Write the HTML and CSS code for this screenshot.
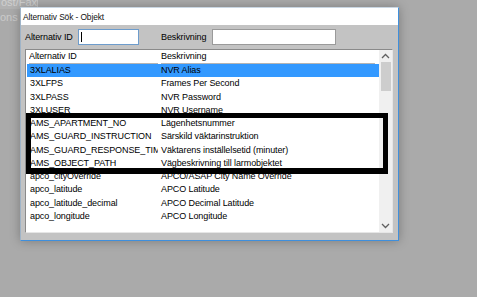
FILE: index.html
```html
<!doctype html>
<html lang="sv">
<head>
    <meta charset="utf-8">
    <title>Alternativ Sök - Objekt</title>
    <link rel="stylesheet" href="styles.css">
</head>
<body>
    <div class="desk">
        <div class="desk-tab">ost/Fax</div>
        <div class="desk-menu">ons</div>
    </div>

    <div class="dialog">
        <div class="titlebar">Alternativ Sök - Objekt</div>
        <div class="content">
            <div class="filter">
                <label class="id-label">Alternativ ID</label>
                <span class="input id-input"><span class="caret"></span></span>
                <label class="desc-label">Beskrivning</label>
                <span class="input desc-input"></span>
            </div>

            <div class="list">
                <div class="rows">
                    <div class="row header"><span class="c1">Alternativ ID</span><span class="c2">Beskrivning</span></div>
                    <div class="row selected"><span class="c1">3XLALIAS</span><span class="c2">NVR Alias</span></div>
                    <div class="row"><span class="c1">3XLFPS</span><span class="c2">Frames Per Second</span></div>
                    <div class="row"><span class="c1">3XLPASS</span><span class="c2">NVR Password</span></div>
                    <div class="row"><span class="c1">3XLUSER</span><span class="c2">NVR Username</span></div>
                    <div class="row"><span class="c1">AMS_APARTMENT_NO</span><span class="c2">Lägenhetsnummer</span></div>
                    <div class="row"><span class="c1">AMS_GUARD_INSTRUCTION</span><span class="c2">Särskild väktarinstruktion</span></div>
                    <div class="row"><span class="c1">AMS_GUARD_RESPONSE_TIME</span><span class="c2">Väktarens inställelsetid (minuter)</span></div>
                    <div class="row"><span class="c1">AMS_OBJECT_PATH</span><span class="c2">Vägbeskrivning till larmobjektet</span></div>
                    <div class="row"><span class="c1">apco_cityOverride</span><span class="c2">APCO/ASAP City Name Override</span></div>
                    <div class="row"><span class="c1">apco_latitude</span><span class="c2">APCO Latitude</span></div>
                    <div class="row"><span class="c1">apco_latitude_decimal</span><span class="c2">APCO Decimal Latitude</span></div>
                    <div class="row"><span class="c1">apco_longitude</span><span class="c2">APCO Longitude</span></div>
                </div>
                <div class="scrollbar">
                    <div class="arrow">
                        <svg width="9" height="6" viewBox="0 0 9 6"><polyline points="1,5 4.5,1.5 8,5" fill="none" stroke="#606060" stroke-width="1.3"/></svg>
                    </div>
                    <div class="thumb"></div>
                    <div class="track"></div>
                    <div class="arrow">
                        <svg width="9" height="6" viewBox="0 0 9 6"><polyline points="1,1 4.5,4.5 8,1" fill="none" stroke="#606060" stroke-width="1.3"/></svg>
                    </div>
                </div>
            </div>
        </div>
    </div>

    <!-- annotation drawn over the list -->
    <div class="mark"></div>
</body>
</html>
```

FILE: styles.css
```css
* {
    box-sizing: border-box;
}
body {
    margin: 0;
    width: 477px;
    height: 297px;
    overflow: hidden;
    background-color: #aaaaaa;
    font-family: "Liberation Sans", Arial, sans-serif;
    font-size: 9px;
    letter-spacing: -0.1px;
    color: #000;
}
.desk {
    width: 40px;
}
.desk-tab {
    width: 38px;
    height: 9px;
    line-height: 5px;
    padding-left: 1px;
    background-color: #b2b2b2;
    border-right: 1px solid #c4c4c4;
    color: #d0d0d0;
    font-size: 11px;
    letter-spacing: 0;
    overflow: hidden;
}
.desk-menu {
    width: 20px;
    height: 16px;
    line-height: 17px;
    color: #cbcbcb;
    font-size: 11px;
    letter-spacing: 0;
}
.dialog {
    position: absolute;
    left: 20px;
    top: 7px;
    width: 379px;
    height: 234px;
    border: 1px solid #3f8fdc;
    border-left-color: #9fb4c8;
    border-top-color: #c9d6e2;
    box-shadow: 0 0 10px rgba(0, 0, 0, 0.28);
    display: flex;
    flex-direction: column;
}
.titlebar {
    height: 17px;
    line-height: 18px;
    padding-left: 2px;
    background-color: #fff;
    font-size: 8.4px;
    color: #111;
}
.content {
    flex: 1;
    background-color: #c3c3c3;
    padding: 4px 5px 7px 4px;
    display: flex;
    flex-direction: column;
    gap: 4px;
}
.filter {
    display: flex;
    align-items: center;
    height: 16px;
}
.id-label {
    width: 53px;
}
.desc-label {
    width: 51px;
    margin-left: 22px;
}
.input {
    display: block;
    height: 16px;
    background-color: #fff;
    border: 1px solid #9a9a9a;
}
.id-input {
    width: 61px;
    border-color: #6d9ccc;
    padding: 2px 0 0 2px;
}
.caret {
    display: block;
    width: 1px;
    height: 10px;
    background-color: #000;
}
.desc-input {
    width: 124px;
}
.list {
    flex: 1;
    display: flex;
    background-color: #fff;
    border: 1px solid;
    border-color: #8a8a8a #e6e6e6 #e6e6e6 #8a8a8a;
}
.rows {
    flex: 1;
    padding-left: 1px;
    overflow: hidden;
}
.row {
    display: flex;
    height: 13.25px;
    line-height: 13.25px;
    white-space: nowrap;
}
.row.header {
    height: 14px;
    line-height: 12px;
}
.row.header .c1,
.row.header .c2 {
    border-bottom: 1px solid #b4b4b4;
    padding-left: 0;
    margin-left: 2px;
}
.row.header .c1 {
    width: 129px;
}
.row.header .c2 {
    width: 214px;
    margin-left: 3px;
}
.row.selected {
    background-color: #3399ff;
}
.c1 {
    width: 131px;
    padding-left: 3px;
    overflow: hidden;
}
.c2 {
    margin-left: 3px;
}
.scrollbar {
    width: 13px;
    background-color: #f0f0f0;
    display: flex;
    flex-direction: column;
    align-items: center;
}
.arrow {
    height: 12px;
    display: flex;
    align-items: center;
    justify-content: center;
}
.thumb {
    width: 10px;
    height: 29px;
    background-color: #cdcdcd;
}
.track {
    flex: 1;
}
.mark {
    position: absolute;
    left: 26px;
    top: 113px;
    width: 362px;
    height: 61px;
    border: 5px solid #000;
    border-bottom-width: 6px;
}
```
